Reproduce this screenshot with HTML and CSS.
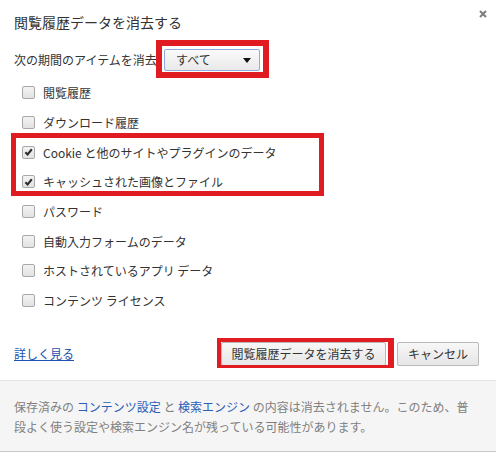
FILE: index.html
```html
<!DOCTYPE html>
<html lang="ja">
<head>
    <meta charset="UTF-8">
    <title>閲覧履歴データを消去する</title>
    <link rel="stylesheet" href="styles.css">
</head>
<body>
    <div class="dialog">
        <div class="header">
            <h1>閲覧履歴データを消去する</h1>
            <button class="close" aria-label="閉じる">
                <svg width="8" height="8" viewBox="0 0 8 8"><path d="M1 1L7 7M7 1L1 7" stroke="#7d7d7d" stroke-width="2"/></svg>
            </button>
        </div>

        <!-- 期間 -->
        <div class="period">
            <span class="period-label">次の期間のアイテムを消去</span>
            <div class="pick mark">
                <div class="select">
                    <span>すべて</span>
                    <span class="arrow"></span>
                </div>
            </div>
        </div>

        <!-- 項目 -->
        <div class="list">
            <label class="row"><span class="box"></span>閲覧履歴</label>
            <label class="row"><span class="box"></span>ダウンロード履歴</label>
            <div class="group mark">
                <label class="row"><span class="box checked"><svg width="12" height="12" viewBox="0 0 12 12"><path d="M2.6 6.2L5 8.6L9.6 3" fill="none" stroke="#2b2b2b" stroke-width="2.2"/></svg></span>Cookie と他のサイトやプラグインのデータ</label>
                <label class="row"><span class="box checked"><svg width="12" height="12" viewBox="0 0 12 12"><path d="M2.6 6.2L5 8.6L9.6 3" fill="none" stroke="#2b2b2b" stroke-width="2.2"/></svg></span>キャッシュされた画像とファイル</label>
            </div>
            <label class="row"><span class="box"></span>パスワード</label>
            <label class="row"><span class="box"></span>自動入力フォームのデータ</label>
            <label class="row"><span class="box"></span>ホストされているアプリ データ</label>
            <label class="row"><span class="box"></span>コンテンツ ライセンス</label>
        </div>

        <div class="actions">
            <a href="#" class="more">詳しく見る</a>
            <div class="buttons">
                <div class="main-wrap mark">
                    <button class="btn">閲覧履歴データを消去する</button>
                </div>
                <button class="btn">キャンセル</button>
            </div>
        </div>

        <div class="footer">
            <p>保存済みの <a href="#">コンテンツ設定</a> と <a href="#">検索エンジン</a> の内容は消去されません。このため、普<br>段よく使う設定や検索エンジン名が残っている可能性があります。</p>
        </div>
    </div>
</body>
</html>
```

FILE: styles.css
```css
* {
    margin: 0;
    padding: 0;
    box-sizing: border-box;
}

body {
    font-family: "Noto Sans CJK JP", "Liberation Sans", sans-serif;
    font-size: 12px;
    color: #333;
    background: #fff;
}

.dialog {
    width: 496px;
}

.header {
    display: flex;
    justify-content: space-between;
    align-items: flex-start;
    padding: 12px 9px 0 14px;
}

.header h1 {
    font-size: 14px;
    font-weight: normal;
    line-height: 20px;
    color: #333;
}

.close {
    border: none;
    background: none;
    margin-top: -2px;
    width: 8px;
    height: 8px;
    display: flex;
}

.period {
    display: flex;
    align-items: center;
    margin-top: 17px;
    padding-left: 14px;
    height: 22px;
}

.period-label {
    width: 150px;
    line-height: 22px;
    white-space: nowrap;
}

/* 赤い注釈枠 */
.mark {
    position: relative;
}

.mark::after {
    content: "";
    position: absolute;
    border: 6px solid #e11b22;
    pointer-events: none;
}

.pick::after {
    top: -9px;
    left: -8px;
    right: -9px;
    bottom: -7px;
}

.select {
    width: 96px;
    height: 22px;
    border: 1px solid #8eadde;
    border-radius: 2px;
    background: linear-gradient(#fafafa, #e9e9e9);
    display: flex;
    align-items: center;
    justify-content: space-between;
    padding: 0 8px 0 11px;
    line-height: 20px;
}

.arrow {
    width: 0;
    height: 0;
    border-left: 4px solid transparent;
    border-right: 4px solid transparent;
    border-top: 5px solid #111;
}

.list {
    margin-top: 7px;
}

.row {
    display: flex;
    align-items: center;
    height: 29.7px;
    padding-left: 22px;
    white-space: nowrap;
}

.box {
    width: 13px;
    height: 13px;
    border: 1px solid #a8a8a8;
    border-radius: 2px;
    background: linear-gradient(#f3f3f3, #e2e2e2);
    margin-right: 8px;
    display: flex;
    align-items: center;
    justify-content: center;
}

.group::after {
    top: -4px;
    bottom: 1px;
    left: 11px;
    width: 303px;
    border-width: 5px;
}

.actions {
    display: flex;
    justify-content: space-between;
    align-items: center;
    margin-top: 26px;
    padding: 0 17px 0 14px;
    height: 24px;
}

.more {
    color: #2152b0;
    text-decoration: underline;
}

.buttons {
    display: flex;
    gap: 11px;
}

.btn {
    font-family: inherit;
    font-size: 12px;
    color: #333;
    height: 24px;
    border: 1px solid #b9b9b9;
    border-radius: 2px;
    background: linear-gradient(#f7f7f7, #e6e6e6);
    padding: 0 2px;
    line-height: 22px;
    white-space: nowrap;
}

.main-wrap .btn {
    width: 165px;
}

.buttons > .btn {
    width: 82px;
}

.main-wrap::after {
    top: -4px;
    left: -4px;
    right: -8px;
    bottom: -2px;
    border-width: 4px 6px 3px 4px;
}

.footer {
    margin-top: 14px;
    background: #f5f5f5;
    border-top: 1px solid #e3e3e3;
    border-bottom: 1px solid #c9c9c9;
    padding: 16px 14px 14px 14px;
    line-height: 20px;
    color: #808080;
}

.footer a {
    color: #2a5db5;
    text-decoration: none;
}
```
